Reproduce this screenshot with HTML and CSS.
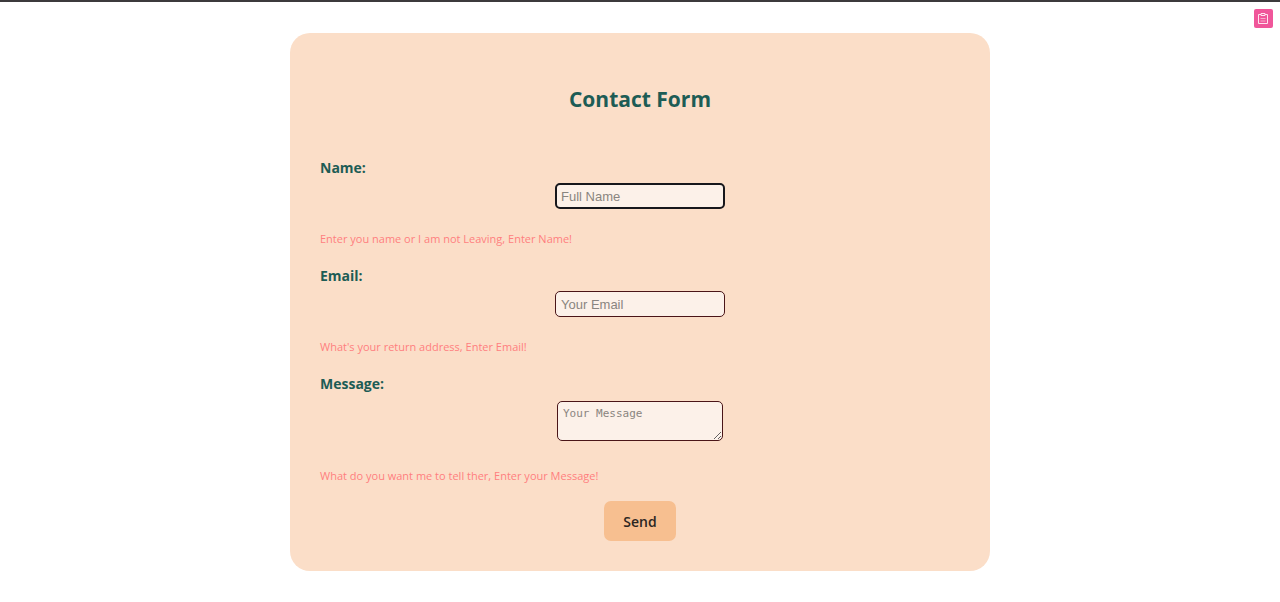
FILE: index.html
```html
<!DOCTYPE html>
<html lang="en">
<head>
<meta charset="utf-8">
<meta name="viewport" content="width=device-width, initial-scale=1">
<title>Contact Form</title>
<link rel="stylesheet" href="styles.css">
</head>
<body>
<button class="clip-button" type="button" aria-label="Clipboard">
  <svg class="clip-icon" viewBox="0 0 19 19" aria-hidden="true">
    <path d="M7 5.5H4.5v9h9v-9H11M7 4.5h4v2H7z"/>
    <path class="clip-lines" d="M6.5 9.5h5M6.5 12h5"/>
  </svg>
</button>
<main class="card">
  <h1 class="title">Contact Form</h1>
  <form class="form" novalidate>
    <div class="field">
      <label class="label" for="name">Name:</label>
      <input class="control active" id="name" type="text" placeholder="Full Name">
      <p class="error">Enter you name or I am not Leaving, Enter Name!</p>
    </div>
    <div class="field">
      <label class="label" for="email">Email:</label>
      <input class="control" id="email" type="email" placeholder="Your Email">
      <p class="error">What's your return address, Enter Email!</p>
    </div>
    <div class="field">
      <label class="label" for="message">Message:</label>
      <textarea class="control message" id="message" placeholder="Your Message"></textarea>
      <p class="error">What do you want me to tell ther, Enter your Message!</p>
    </div>
    <button class="send" type="submit">Send</button>
  </form>
</main>
</body>
</html>
```
FILE: styles.css
```css
* {
  box-sizing: border-box;
}

body {
  margin: 0;
  padding: 31px 16px;
  border-top: 2px solid #3c3a3c;
  background: #fff;
  font-family: "Open Sans", "Noto Sans", sans-serif;
}

.clip-button {
  position: absolute;
  top: 9px;
  right: 7px;
  width: 19px;
  height: 19px;
  padding: 0;
  border: 0;
  border-radius: 2px;
  background: #f0569a;
}

.clip-icon {
  display: block;
  fill: none;
  stroke: #ffe3ef;
  stroke-width: 1;
}

.clip-lines {
  stroke: #f9a9cb;
}

.card {
  max-width: 700px;
  margin: 0 auto;
  padding: 50px 30px 30px;
  border-radius: 20px;
  background: #fbdec8;
}

.title {
  margin: 0 0 40px;
  color: #1d5c55;
  font-size: 21px;
  font-weight: 700;
  line-height: 33px;
  text-align: center;
}

.form {
  display: flex;
  flex-direction: column;
  gap: 16px;
}

.field {
  display: flex;
  flex-direction: column;
  align-items: center;
}

.label {
  align-self: flex-start;
  color: #1d5c55;
  font-size: 14px;
  font-weight: 700;
  line-height: 24px;
}

.control {
  width: 170px;
  height: 26px;
  margin: 3px 0 21px;
  padding: 0 5px;
  border: 1px solid #4a1518;
  border-radius: 5px;
  background: #fcf1e9;
  font-family: "Liberation Sans", Arial, sans-serif;
  font-size: 13px;
}

.control::placeholder {
  color: #8a8580;
}

.active {
  padding: 0 4px;
  border: 2px solid #17171c;
  outline: none;
}

.message {
  width: 166px;
  height: 40px;
  margin: 5px 0 26px;
  padding: 4px 5px;
  font-family: "DejaVu Sans Mono", monospace;
  font-size: 11px;
  line-height: 16px;
}

.error {
  align-self: flex-start;
  margin: 0;
  color: #ff7f7f;
  font-size: 11px;
  line-height: 18px;
}

.send {
  align-self: center;
  height: 40px;
  padding: 0 19px;
  border: 0;
  border-radius: 7px;
  background: #f7bf90;
  color: #2b2622;
  font-family: inherit;
  font-size: 14px;
  font-weight: 600;
}
```
